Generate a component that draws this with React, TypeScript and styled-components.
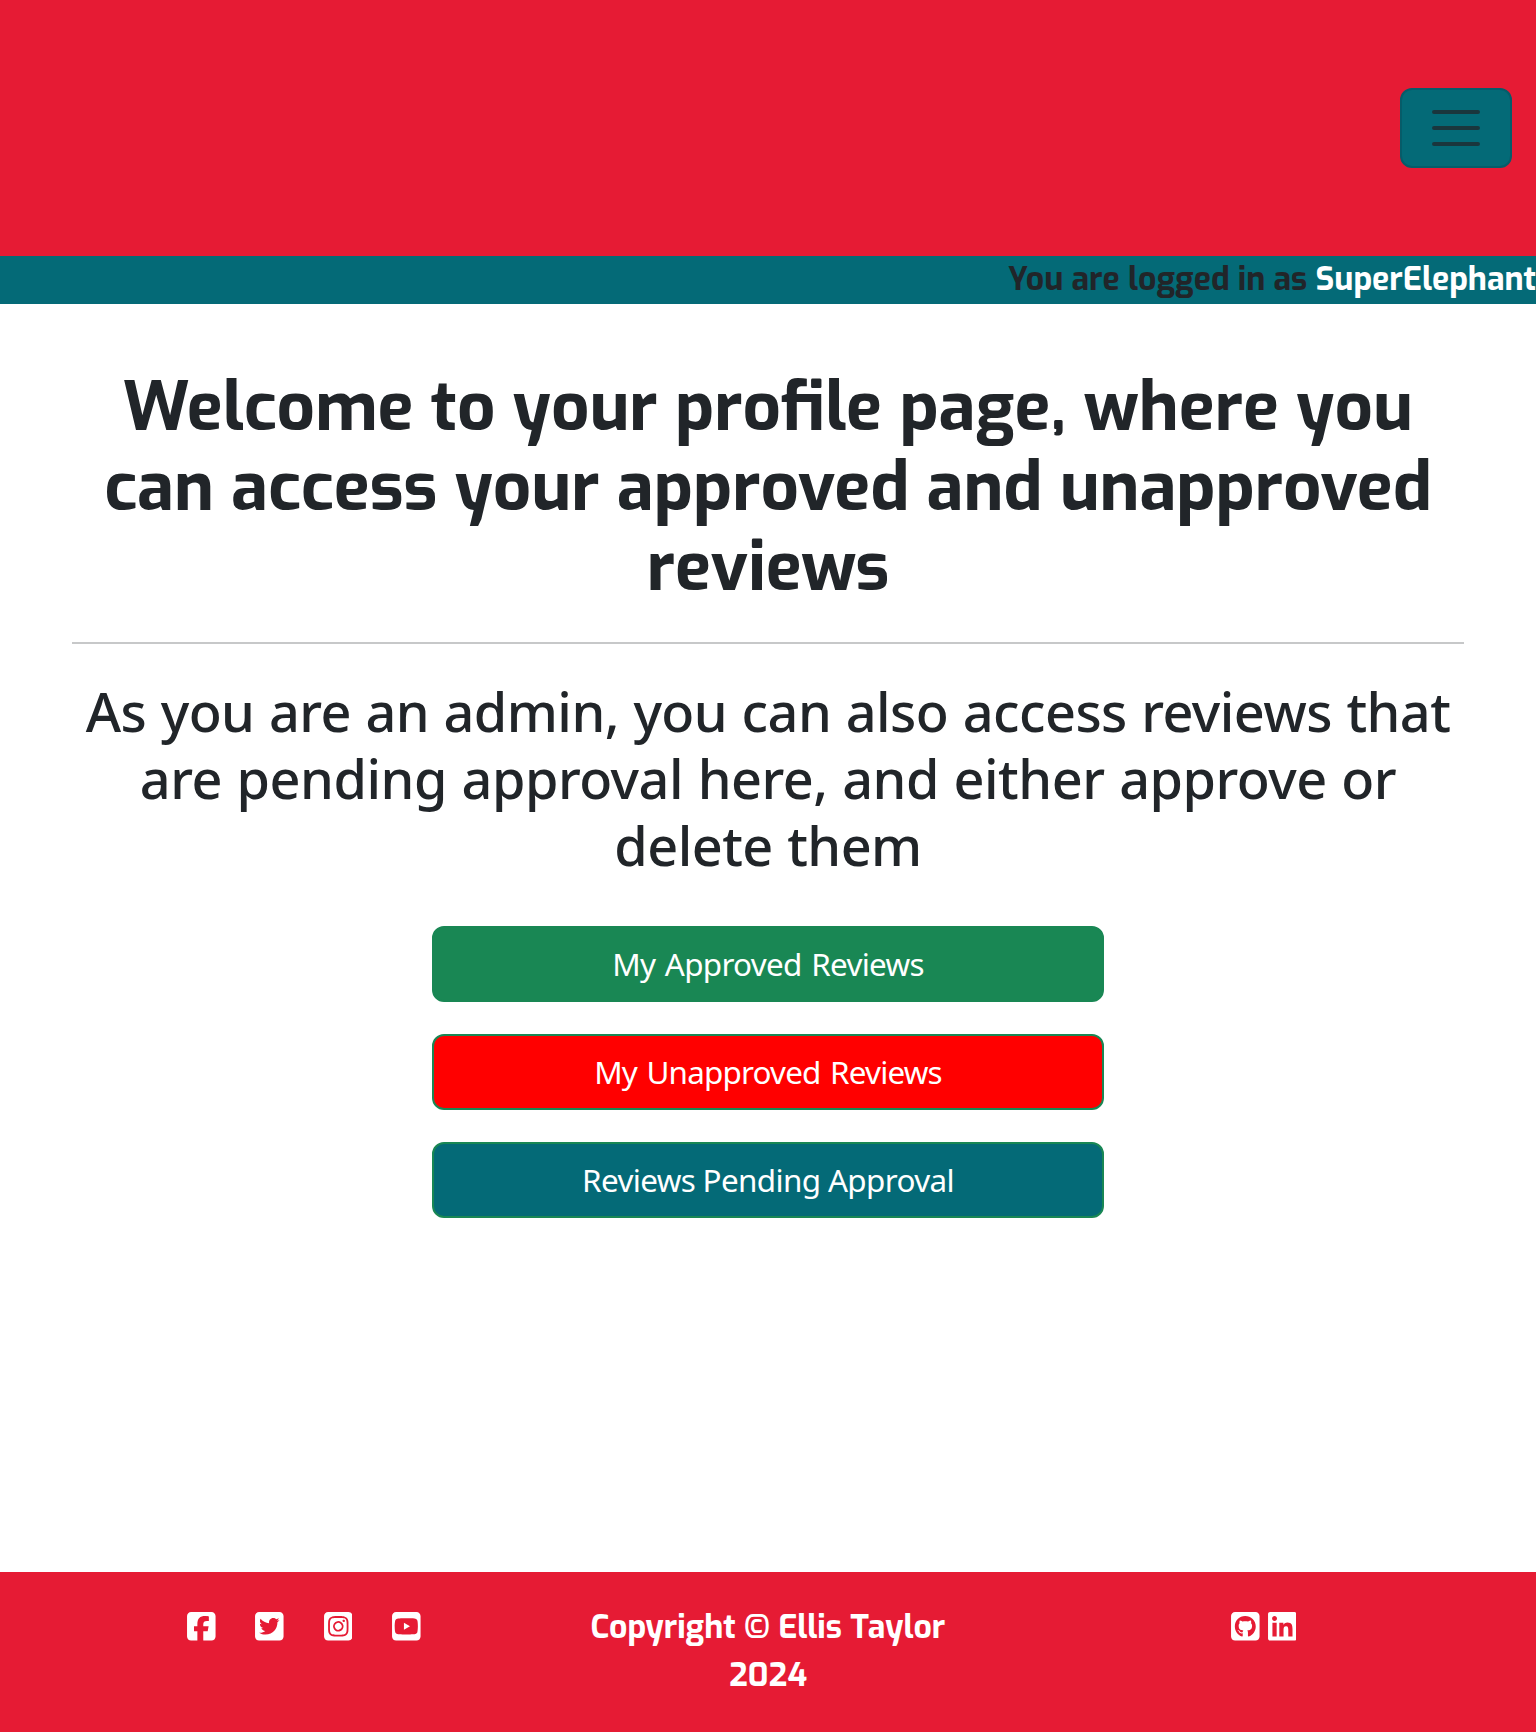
import React from 'react';
import styled, { createGlobalStyle } from 'styled-components';
import {
  FaSquareFacebook,
  FaSquareTwitter,
  FaSquareInstagram,
  FaSquareYoutube,
  FaSquareGithub,
  FaLinkedin,
} from 'react-icons/fa6';

const RED = '#e61b34';
const TEAL = '#046a77';
const INK = '#212529';
const GREEN = '#198754';

const displayFont = `Exo, Roboto, sans-serif`;
const bodyFont = `"Noto Sans", "Open Sans", sans-serif`;

const GlobalStyle = createGlobalStyle`
  *, *::before, *::after { box-sizing: border-box; }
  body {
    margin: 0;
    background: #fff;
    color: ${INK};
    font-family: ${bodyFont};
  }
`;

const Page = styled.div`
  display: flex;
  flex-direction: column;
  min-height: 1732px;
  overflow-x: hidden;
`;

const Navbar = styled.nav`
  display: flex;
  align-items: center;
  justify-content: flex-end;
  height: 256px;
  padding-right: 24px;
  background: ${RED};
`;

const MenuButton = styled.button`
  display: flex;
  align-items: center;
  justify-content: center;
  width: 112px;
  height: 80px;
  padding: 0;
  background: ${TEAL};
  border: 2px solid #065c69;
  border-radius: 12px;
`;

const MenuIcon = styled.svg`
  width: 60px;
  height: 60px;
`;

const StatusBar = styled.div`
  height: 48px;
  padding-bottom: 2px;
  background: ${TEAL};
  font: 700 32px/46px ${displayFont};
  text-align: right;
  white-space: nowrap;
`;

const UserName = styled.span`
  color: #fff;
`;

const Main = styled.main`
  display: flex;
  flex: 1;
  flex-direction: column;
  padding: 64px 72px 0;
  text-align: center;
`;

const Line = styled.span<{ $track?: number }>`
  display: block;
  letter-spacing: ${p => (p.$track ? `${p.$track}px` : 'normal')};
  white-space: nowrap;
`;

const Title = styled.h1`
  margin: 0;
  font: 700 67.04px/80px ${displayFont};
`;

const Divider = styled.hr`
  width: 100%;
  height: 2px;
  margin: 34px 0 34px;
  border: 0;
  background: #c7c8c9;
`;

const Subtitle = styled.h2`
  margin: 0;
  font: 500 54px/67px ${bodyFont};
  word-spacing: 1px;
`;

const Actions = styled.div`
  display: flex;
  flex-direction: column;
  align-items: center;
  gap: 32px;
  margin-top: 47px;
`;

const ActionLink = styled.a<{ $bg: string; $track: number; $word?: number }>`
  display: flex;
  align-items: center;
  justify-content: center;
  width: 672px;
  height: 76px;
  padding-bottom: 2px;
  background: ${p => p.$bg};
  border: 2px solid ${GREEN};
  border-radius: 12px;
  color: #fff;
  font-size: 31.4px;
  letter-spacing: ${p => p.$track}px;
  word-spacing: ${p => p.$word ?? 0}px;
`;

const Footer = styled.footer`
  display: grid;
  grid-template-columns: 568px 400px 568px;
  height: 160px;
  background: ${RED};
  color: #fff;
`;

const IconRow = styled.div<{ $gap: number; $pad: string }>`
  display: flex;
  gap: ${p => p.$gap}px;
  padding: ${p => p.$pad};

  svg {
    flex: none;
    width: 28.6px;
    height: 32.6px;
  }
`;

const Copyright = styled.p`
  margin: 0;
  padding-top: 31px;
  font: 700 32px/48px ${displayFont};
  text-align: center;
`;

export default function App() {
  return (
    <Page>
      <GlobalStyle />
      <Navbar>
        <MenuButton aria-label="Toggle navigation">
          <MenuIcon viewBox="0 0 30 30">
            <path
              stroke="rgba(33, 37, 41, 0.75)"
              strokeLinecap="round"
              strokeMiterlimit="10"
              strokeWidth="2"
              d="M4 7h22M4 15h22M4 23h22"
            />
          </MenuIcon>
        </MenuButton>
      </Navbar>
      <StatusBar>
        You are logged in as <UserName>SuperElephant</UserName>
      </StatusBar>
      <Main>
        <Title>
          <Line>Welcome to your profile page, where you</Line>
          <Line>can access your approved and unapproved</Line>
          <Line>reviews</Line>
        </Title>
        <Divider />
        <Subtitle>
          <Line $track={-0.55}>As you are an admin, you can also access reviews that</Line>
          <Line $track={-0.48}>are pending approval here, and either approve or</Line>
          <Line $track={-0.55}>delete them</Line>
        </Subtitle>
        <Actions>
          <ActionLink $bg={GREEN} $track={-0.68} $word={2}>My Approved Reviews</ActionLink>
          <ActionLink $bg="#ff0000" $track={-0.8} $word={2}>My Unapproved Reviews</ActionLink>
          <ActionLink $bg={TEAL} $track={-0.63}>Reviews Pending Approval</ActionLink>
        </Actions>
      </Main>
      <Footer>
        <IconRow $gap={39.8} $pad="38px 0 0 187.1px">
          <FaSquareFacebook />
          <FaSquareTwitter />
          <FaSquareInstagram />
          <FaSquareYoutube />
        </IconRow>
        <Copyright>
          <Line>Copyright © Ellis Taylor</Line>
          <Line>2024</Line>
        </Copyright>
        <IconRow $gap={8.1} $pad="38px 0 0 263.2px">
          <FaSquareGithub />
          <FaLinkedin />
        </IconRow>
      </Footer>
    </Page>
  );
}
